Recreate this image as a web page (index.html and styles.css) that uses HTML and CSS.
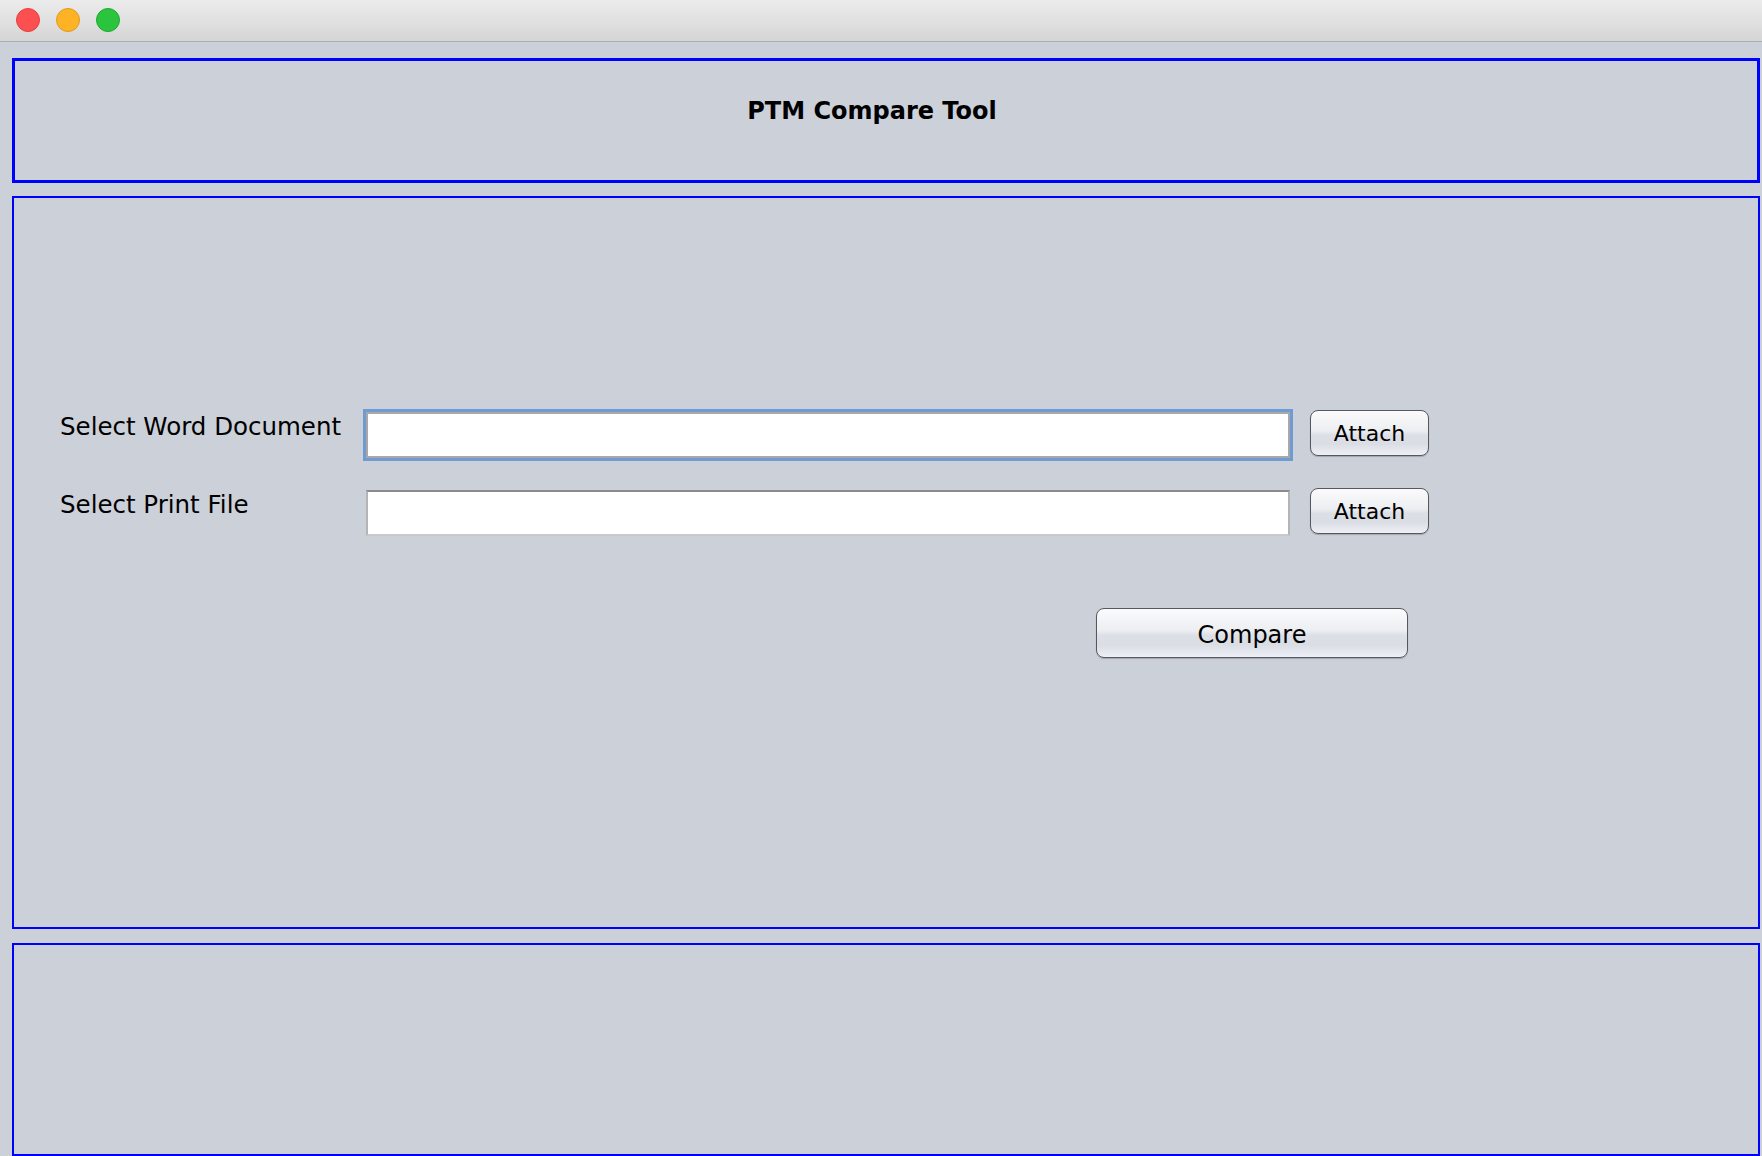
FILE: index.html
```html
<!DOCTYPE html>
<html lang="en">
<head>
<meta charset="utf-8">
<title>PTM Compare Tool</title>
<link rel="stylesheet" href="styles.css">
</head>
<body>
<div class="titlebar">
  <span class="light red"></span>
  <span class="light yellow"></span>
  <span class="light green"></span>
</div>
<div class="window">
  <header class="banner"><h1>PTM Compare Tool</h1></header>
  <main class="panel">
    <div class="form">
      <label class="label">Select Word Document</label>
      <input type="text" class="input focused">
      <button class="btn attach" type="button">Attach</button>
      <label class="label">Select Print File</label>
      <input type="text" class="input">
      <button class="btn attach" type="button">Attach</button>
    </div>
    <div class="actions">
      <button class="btn compare" type="button">Compare</button>
    </div>
  </main>
  <section class="status"></section>
</div>
</body>
</html>
```
FILE: styles.css
```css
* { box-sizing: border-box; }
html, body { margin: 0; padding: 0; }
body {
  width: 1762px;
  height: 1156px;
  overflow: hidden;
  background: #ccd0d9;
  font-family: "DejaVu Sans", "Liberation Sans", sans-serif;
  color: #000;
}
.titlebar {
  height: 42px;
  background: linear-gradient(#ececec, #d5d5d5);
  border-bottom: 1px solid #adadad;
  display: flex;
  align-items: center;
  padding: 0 0 2px 16px;
  gap: 16px;
}
.light {
  width: 24px;
  height: 24px;
  border-radius: 50%;
  display: block;
}
.red { background: #fc4f4f; border: 1px solid #e0443e; }
.yellow { background: #fdb324; border: 1px solid #de9a22; }
.green { background: #2bc53d; border: 1px solid #22a632; }

.window {
  padding: 16px 2px 0 12px;
}
.banner {
  height: 125px;
  border: 3px solid #0000ff;
  padding: 36px 28px 0 0;
  text-align: center;
}
.banner h1 {
  margin: 0;
  font-size: 24px;
  line-height: 28px;
  font-weight: bold;
}
.panel {
  margin-top: 13px;
  height: 733px;
  border: 2px solid #0000ff;
  padding: 212px 0 0 46px;
}
.form {
  display: grid;
  grid-template-columns: 286px 924px 119px;
  grid-auto-rows: 46px;
  column-gap: 20px;
  row-gap: 32px;
}
.label {
  font-size: 24.5px;
  line-height: 28px;
  align-self: start;
  padding-top: 3px;
  white-space: nowrap;
}
.input {
  display: block;
  width: 924px;
  height: 46px;
  margin: 2px 0 0;
  background: #fff;
  border: 2px solid #b4b4b4;
  border-top-color: #8a8a8a;
  border-bottom-color: #c9c9c9;
  outline: none;
  font: inherit;
}
.input.focused {
  border-color: #a9a9a9;
  box-shadow: 0 0 0 3px #6f9bd2;
}
.btn {
  font-family: "DejaVu Sans", "Liberation Sans", sans-serif;
  color: #000;
  border: 1px solid #55585f;
  border-radius: 8px;
  background: linear-gradient(#fbfbfc 0%, #eceef1 45%, #dcdfe5 55%, #dadde4 75%, #eef0f6 100%);
  box-shadow: 0 1px 1px rgba(0,0,0,0.2);
  padding: 0;
}
.attach {
  width: 119px;
  height: 46px;
  font-size: 22px;
}
.actions {
  padding: 74px 0 0 1036px;
}
.compare {
  width: 312px;
  height: 50px;
  font-size: 24px;
  padding-top: 3px;
}
.status {
  margin-top: 14px;
  height: 213px;
  border: 2px solid #0000ff;
}
```
